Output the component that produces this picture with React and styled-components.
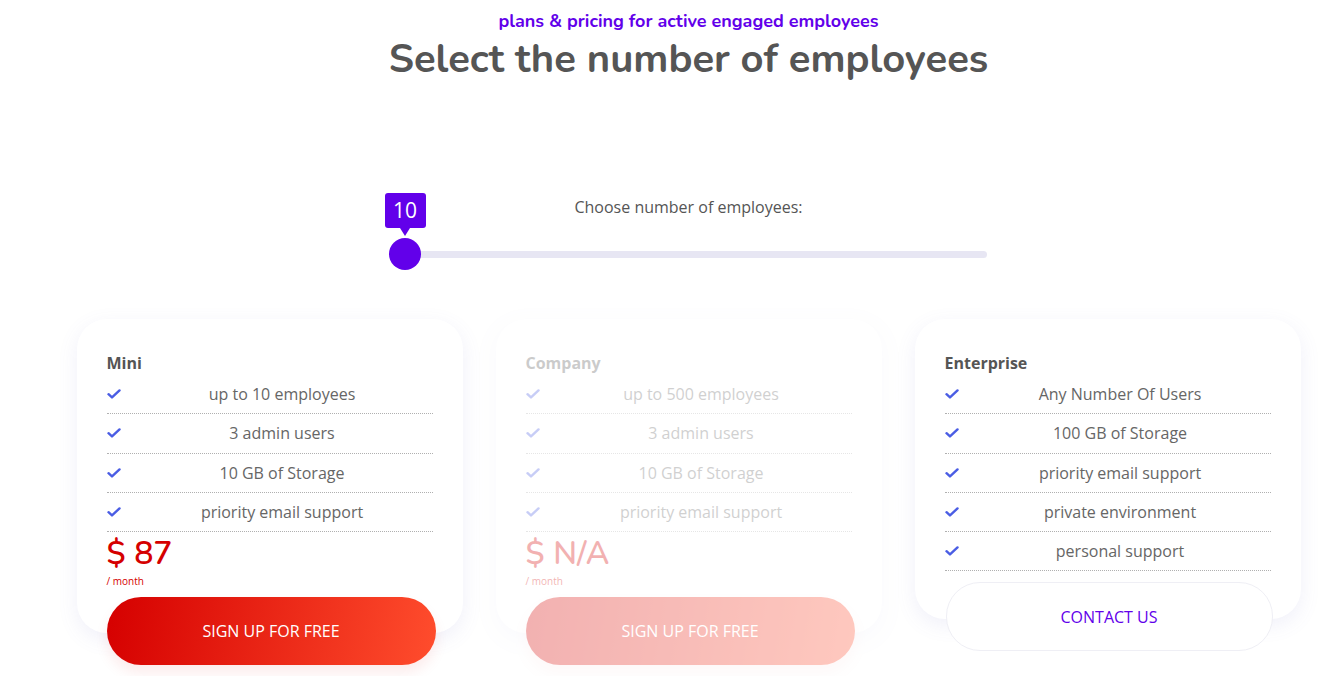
import React from 'react'
import styled, { createGlobalStyle } from 'styled-components'

const GlobalStyle = createGlobalStyle`
  body {
    margin: 0;
    background: #fff;
    font-family: 'Open Sans', 'Liberation Sans', sans-serif;
  }
`

const plans = [
  {
    name: 'Mini',
    features: ['up to 10 employees', '3 admin users', '10 GB of Storage', 'priority email support'],
    price: '87'
  },
  {
    name: 'Company',
    features: ['up to 500 employees', '3 admin users', '10 GB of Storage', 'priority email support'],
    price: 'N/A',
    disabled: true
  },
  {
    name: 'Enterprise',
    features: ['Any Number Of Users', '100 GB of Storage', 'priority email support', 'private environment', 'personal support'],
    contact: true
  }
]

const Check = () => (
  <svg width='14' height='10' viewBox='0 0 14 10'>
    <path d='M1.5 5.2 L5 8.4 L12.5 1.4' fill='none' stroke='#4a5de4' strokeWidth='2.4' strokeLinecap='round' strokeLinejoin='round' />
  </svg>
)

export default function App () {
  return (
    <Page>
      <GlobalStyle />
      <Header>
        <Kicker>plans &amp; pricing for active engaged employees</Kicker>
        <Title>Select the number of employees</Title>
      </Header>

      <SliderBlock>
        <SliderLabel>Choose number of employees:</SliderLabel>
        <Track>
          <Thumb>
            <Bubble>10</Bubble>
          </Thumb>
        </Track>
      </SliderBlock>

      <Cards>
        {plans.map(p => (
          <Card key={p.name} disabled={p.disabled}>
            <PlanName>{p.name}</PlanName>
            <Features>
              {p.features.map(f => (
                <Feature key={f}>
                  <IconBox><Check /></IconBox>
                  <FeatureText>{f}</FeatureText>
                </Feature>
              ))}
            </Features>
            {p.contact
              ? <ContactButton>CONTACT US</ContactButton>
              : (
                <>
                  <Price>$ {p.price}</Price>
                  <Per>/ month</Per>
                  <SignUp>SIGN UP FOR FREE</SignUp>
                </>
                )}
          </Card>
        ))}
      </Cards>
    </Page>
  )
}

const Page = styled.div`
  width: 1337px;
  min-height: 676px;
  padding-left: 40px;
  box-sizing: border-box;
  display: flex;
  flex-direction: column;
  align-items: center;
`

const Header = styled.div`
  display: flex;
  flex-direction: column;
  align-items: center;
  padding-top: 9px;
`

const Kicker = styled.div`
  font-family: 'Nunito', Lato, sans-serif;
  font-weight: 700;
  font-size: 18px;
  line-height: 24px;
  color: #6200ea;
`

const Title = styled.h1`
  margin: 0;
  font-family: 'Nunito', Lato, sans-serif;
  font-weight: 700;
  font-size: 40px;
  line-height: 52px;
  color: #555;
`

const SliderBlock = styled.div`
  width: 596px;
  margin-top: 110px;
  display: flex;
  flex-direction: column;
  align-items: center;
`

const SliderLabel = styled.div`
  font-size: 16px;
  color: #555;
  line-height: 24px;
`

const Track = styled.div`
  position: relative;
  align-self: stretch;
  height: 7px;
  margin-top: 32px;
  border-radius: 4px;
  background: #e7e6f3;
`

const Thumb = styled.div`
  position: absolute;
  left: -2px;
  top: -13px;
  width: 32px;
  height: 32px;
  border-radius: 50%;
  background: #6200ea;
`

const Bubble = styled.div`
  position: absolute;
  left: -4px;
  bottom: 42px;
  width: 41px;
  height: 35px;
  border-radius: 3px;
  background: #6200ea;
  color: #fff;
  font-size: 21px;
  font-weight: 500;
  line-height: 35px;
  text-align: center;

  &::after {
    content: '';
    position: absolute;
    left: 15px;
    top: 100%;
    border-left: 5px solid transparent;
    border-right: 5px solid transparent;
    border-top: 8px solid #6200ea;
  }
`

const Cards = styled.div`
  display: flex;
  align-items: flex-start;
  gap: 33px;
  margin-top: 61px;
`

const Card = styled.div`
  width: 386px;
  box-sizing: border-box;
  padding: 32px 30px 0;
  border-radius: 30px;
  background: #fff;
  box-shadow: 0 6px 20px rgba(110, 110, 200, 0.1);
  display: flex;
  flex-direction: column;
  opacity: ${p => (p.disabled ? 0.3 : 1)};
`

const PlanName = styled.div`
  font-weight: 700;
  font-size: 16px;
  line-height: 24px;
  color: #555;
`

const Features = styled.div`
  display: flex;
  flex-direction: column;
`

const Feature = styled.div`
  display: flex;
  align-items: center;
  height: 38.3px;
  border-bottom: 1px dotted #b0b0b0;
`

const IconBox = styled.div`
  width: 25px;
  display: flex;
  align-items: center;
`

const FeatureText = styled.div`
  flex: 1;
  text-align: center;
  font-size: 16px;
  color: #666;
`

const Price = styled.div`
  margin-top: 4px;
  font-family: 'Nunito', Lato, sans-serif;
  font-weight: 600;
  font-size: 32px;
  line-height: 36px;
  color: #d50000;
`

const Per = styled.div`
  margin-top: 2px;
  font-size: 10px;
  line-height: 14px;
  color: #d50000;
`

const pill = `
  height: 68px;
  border-radius: 34px;
  display: flex;
  align-items: center;
  justify-content: center;
  font-size: 16px;
  margin-bottom: -32px;
`

const SignUp = styled.div`
  ${pill}
  margin-top: 9px;
  width: 329px;
  color: #fff;
  background: linear-gradient(100deg, #d50000 0%, #ff4d2d 100%);
  box-shadow: 0 8px 14px rgba(213, 0, 0, 0.08);
`

const ContactButton = styled.div`
  ${pill}
  margin-top: 11px;
  margin-left: 1px;
  width: 325px;
  height: 67px;
  color: #6200ea;
  background: #fff;
  border: 1px solid #efeff5;
`
